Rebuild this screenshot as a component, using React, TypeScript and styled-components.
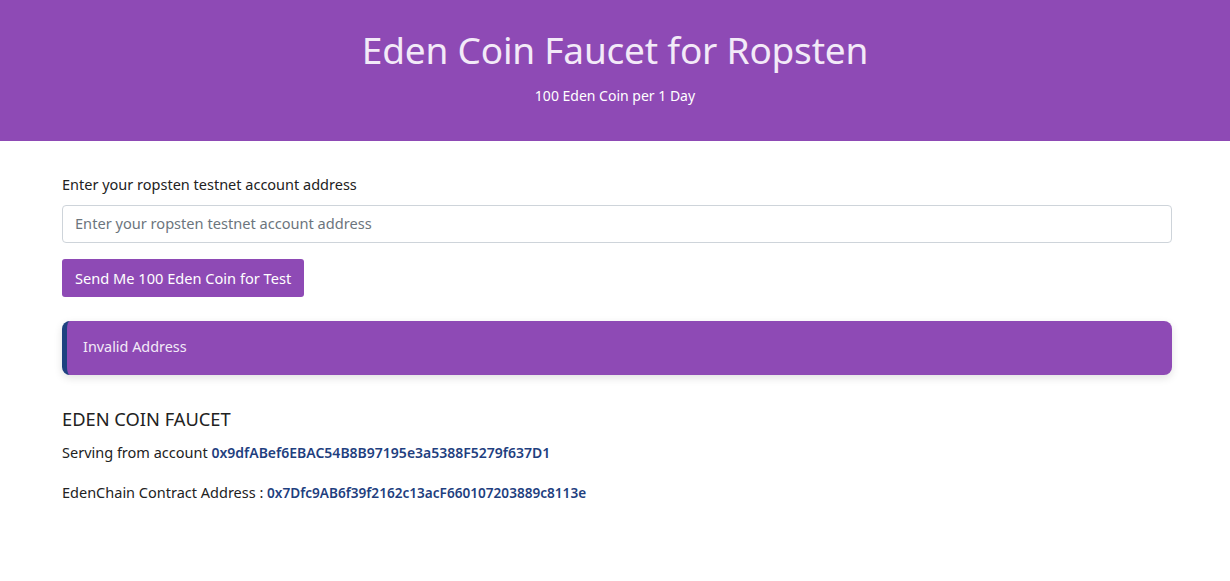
import React from "react";
import styled, { createGlobalStyle } from "styled-components";

const Global = createGlobalStyle`
  html, body { margin: 0; padding: 0; background: #fff; }
  body { font-family: "Noto Sans", "Open Sans", sans-serif; color: #222; }
  * { box-sizing: border-box; }
`;

const Header = styled.header`
  background: #8e4ab5;
  height: 141px;
  display: flex;
  flex-direction: column;
  align-items: center;
  padding-top: 24px;
  color: #f3eaf8;
`;

const Title = styled.h1`
  margin: 0;
  font-weight: 400;
  font-size: 37px;
  line-height: 52px;
  letter-spacing: -0.2px;
`;

const Subtitle = styled.p`
  margin: 10px 0 0;
  font-size: 14px;
  line-height: 20px;
  color: #fff;
`;

const Container = styled.main`
  width: 1110px;
  margin-left: calc(50% - 553px);
  padding-top: 33px;
  display: flex;
  flex-direction: column;
`;

const Label = styled.label`
  font-size: 14.5px;
  line-height: 20px;
  color: #222;
  margin-bottom: 11px;
`;

const Input = styled.input`
  height: 38px;
  width: 100%;
  border: 1px solid #ced4da;
  border-radius: 4px;
  padding: 0 12px 2px;
  font-family: "Noto Sans", sans-serif;
  font-size: 14.6px;
  color: #495057;
  &::placeholder { color: #6c757d; }
`;

const Button = styled.button`
  margin-top: 16px;
  align-self: flex-start;
  height: 38px;
  padding: 0 13px 1px;
  border: none;
  border-radius: 3px;
  background: #8e4ab5;
  color: #fff;
  font-family: "Noto Sans", sans-serif;
  font-size: 14.6px;
`;

const Alert = styled.div`
  margin-top: 24px;
  height: 54px;
  display: flex;
  align-items: center;
  padding: 0 0 4px 16px;
  background: #8e4ab5;
  border-left: 5px solid #1e4280;
  border-radius: 8px;
  box-shadow: 0 3px 8px rgba(0, 0, 0, 0.12);
  color: #f3eaf8;
  font-size: 14.4px;
`;

const Heading = styled.h4`
  margin: 32px 0 0;
  font-weight: 400;
  font-size: 18.3px;
  line-height: 24px;
  color: #222;
`;

const Line = styled.p<{ $gap: number }>`
  margin: ${(p) => p.$gap}px 0 0;
  font-size: 14.5px;
  line-height: 20px;
  color: #222;
`;

const Addr = styled.span<{ $size: number }>`
  color: #1f3f7f;
  font-weight: 600;
  font-size: ${(p) => p.$size}px;
`;

export default function App() {
  return (
    <>
      <Global />
      <Header>
        <Title>Eden Coin Faucet for Ropsten</Title>
        <Subtitle>100 Eden Coin per 1 Day</Subtitle>
      </Header>
      <Container>
        <Label htmlFor="addr">Enter your ropsten testnet account address</Label>
        <Input id="addr" placeholder="Enter your ropsten testnet account address" />
        <Button>Send Me 100 Eden Coin for Test</Button>
        <Alert>Invalid Address</Alert>
        <Heading>EDEN COIN FAUCET</Heading>
        <Line $gap={11}>
          Serving from account <Addr $size={14}>0x9dfABef6EBAC54B8B97195e3a5388F5279f637D1</Addr>
        </Line>
        <Line $gap={19}>
          EdenChain Contract Address :{" "}
          <Addr $size={13.6}>0x7Dfc9AB6f39f2162c13acF660107203889c8113e</Addr>
        </Line>
      </Container>
    </>
  );
}
